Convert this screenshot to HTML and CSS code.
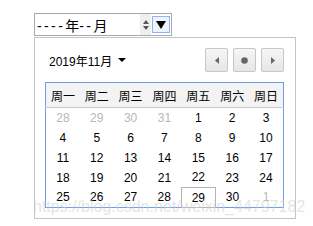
FILE: index.html
```html
<!DOCTYPE html>
<html lang="zh">
<head>
    <meta charset="UTF-8">
    <title>月份选择</title>
    <link rel="stylesheet" href="styles.css">
</head>
<body>
    <div class="picker">
        <div class="field">
            <span class="value"><span class="dash">----</span>年<span class="dash">--</span>月</span>
            <span class="spin">
                <svg width="8" height="14" viewBox="0 0 8 14"><path d="M4 2 L7 6 L1 6 Z M1 8 L7 8 L4 12 Z" fill="#555"/></svg>
            </span>
            <span class="drop">
                <svg width="10" height="8" viewBox="0 0 10 8"><path d="M0 0 L10 0 L5 8 Z" fill="#000"/></svg>
            </span>
        </div>
        <div class="popup">
            <div class="head">
                <span class="month">2019年11月
                    <svg width="8" height="5" viewBox="0 0 8 5"><path d="M0 0 L8 0 L4 4 Z" fill="#000"/></svg>
                </span>
                <div class="nav">
                    <button class="btn"><svg width="4" height="7" viewBox="0 0 4 7"><path d="M4 0 L4 7 L0 3.5 Z" fill="#666"/></svg></button>
                    <button class="btn"><svg width="7" height="7" viewBox="0 0 7 7"><circle cx="3.5" cy="3.5" r="3.3" fill="#666"/></svg></button>
                    <button class="btn"><svg width="4" height="7" viewBox="0 0 4 7"><path d="M0 0 L4 3.5 L0 7 Z" fill="#666"/></svg></button>
                </div>
            </div>
            <table class="cal">
                <thead>
                    <tr><th>周一</th><th>周二</th><th>周三</th><th>周四</th><th>周五</th><th>周六</th><th>周日</th></tr>
                </thead>
                <tbody>
                    <tr><td class="other">28</td><td class="other">29</td><td class="other">30</td><td class="other">31</td><td>1</td><td>2</td><td>3</td></tr>
                    <tr><td>4</td><td>5</td><td>6</td><td>7</td><td>8</td><td>9</td><td>10</td></tr>
                    <tr><td>11</td><td>12</td><td>13</td><td>14</td><td>15</td><td>16</td><td>17</td></tr>
                    <tr><td>18</td><td>19</td><td>20</td><td>21</td><td>22</td><td>23</td><td>24</td></tr>
                    <tr><td>25</td><td>26</td><td>27</td><td>28</td><td class="today">29</td><td>30</td><td class="other">1</td></tr>
                </tbody>
            </table>
            <div class="mark">https://blog.csdn.net/weixin_44797182</div>
        </div>
    </div>
</body>
</html>
```

FILE: styles.css
```css
body {
    margin: 0;
    font-family: "Liberation Sans", Arial, "Noto Sans CJK SC", sans-serif;
    background: #fff;
    color: #000;
}
.picker {
    padding: 13px 0 0 34px;
    width: 262px;
}
.field {
    width: 138px;
    height: 23px;
    box-sizing: border-box;
    border: 1px solid #a9a9a9;
    display: flex;
    align-items: center;
    font-size: 14px;
}
.value {
    flex: 1;
    padding-left: 2px;
}
.dash {
    letter-spacing: 2.4px;
}
.spin {
    width: 11px;
    height: 21px;
    background: #efefef;
    display: flex;
    align-items: center;
    justify-content: center;
}
.drop {
    width: 18px;
    height: 17px;
    margin: 0 1px 0 1px;
    box-sizing: border-box;
    border: 1px solid #8fb4f0;
    background: #eef4fd;
    display: flex;
    align-items: center;
    justify-content: center;
}
.popup {
    position: relative;
    margin-top: 1px;
    width: 262px;
    height: 182px;
    box-sizing: border-box;
    border: 1px solid #c4c4c4;
    padding: 10px 11px 0 10px;
}
.head {
    display: flex;
    align-items: center;
    justify-content: space-between;
    height: 24px;
    margin-bottom: 10px;
}
.month {
    padding-left: 4px;
    font-size: 12px;
    display: flex;
    align-items: center;
    gap: 6px;
}
.nav {
    display: flex;
    gap: 5px;
}
.btn {
    width: 23px;
    height: 24px;
    padding: 0;
    border: 1px solid #c6c6c6;
    border-radius: 2px;
    background: linear-gradient(#f6f6f6, #e6e6e6);
    display: flex;
    align-items: center;
    justify-content: center;
}
.cal {
    border: 1px solid #6d9eeb;
    border-collapse: collapse;
    font-size: 12px;
}
.cal th {
    width: 34px;
    height: 24px;
    padding: 0;
    font-weight: normal;
    background: #f3f3f3;
    border-bottom: 1px solid #c8c8c8;
}
.cal td {
    height: 20px;
    padding: 0;
    text-align: center;
    box-sizing: border-box;
}
.cal .other {
    color: #b8b8b8;
}
.cal .today {
    border: 1px solid #b5b5b5;
}
.mark {
    position: absolute;
    left: -2px;
    top: 160px;
    font-size: 16px;
    color: rgba(205, 205, 205, 0.55);
    white-space: nowrap;
    pointer-events: none;
}
```
